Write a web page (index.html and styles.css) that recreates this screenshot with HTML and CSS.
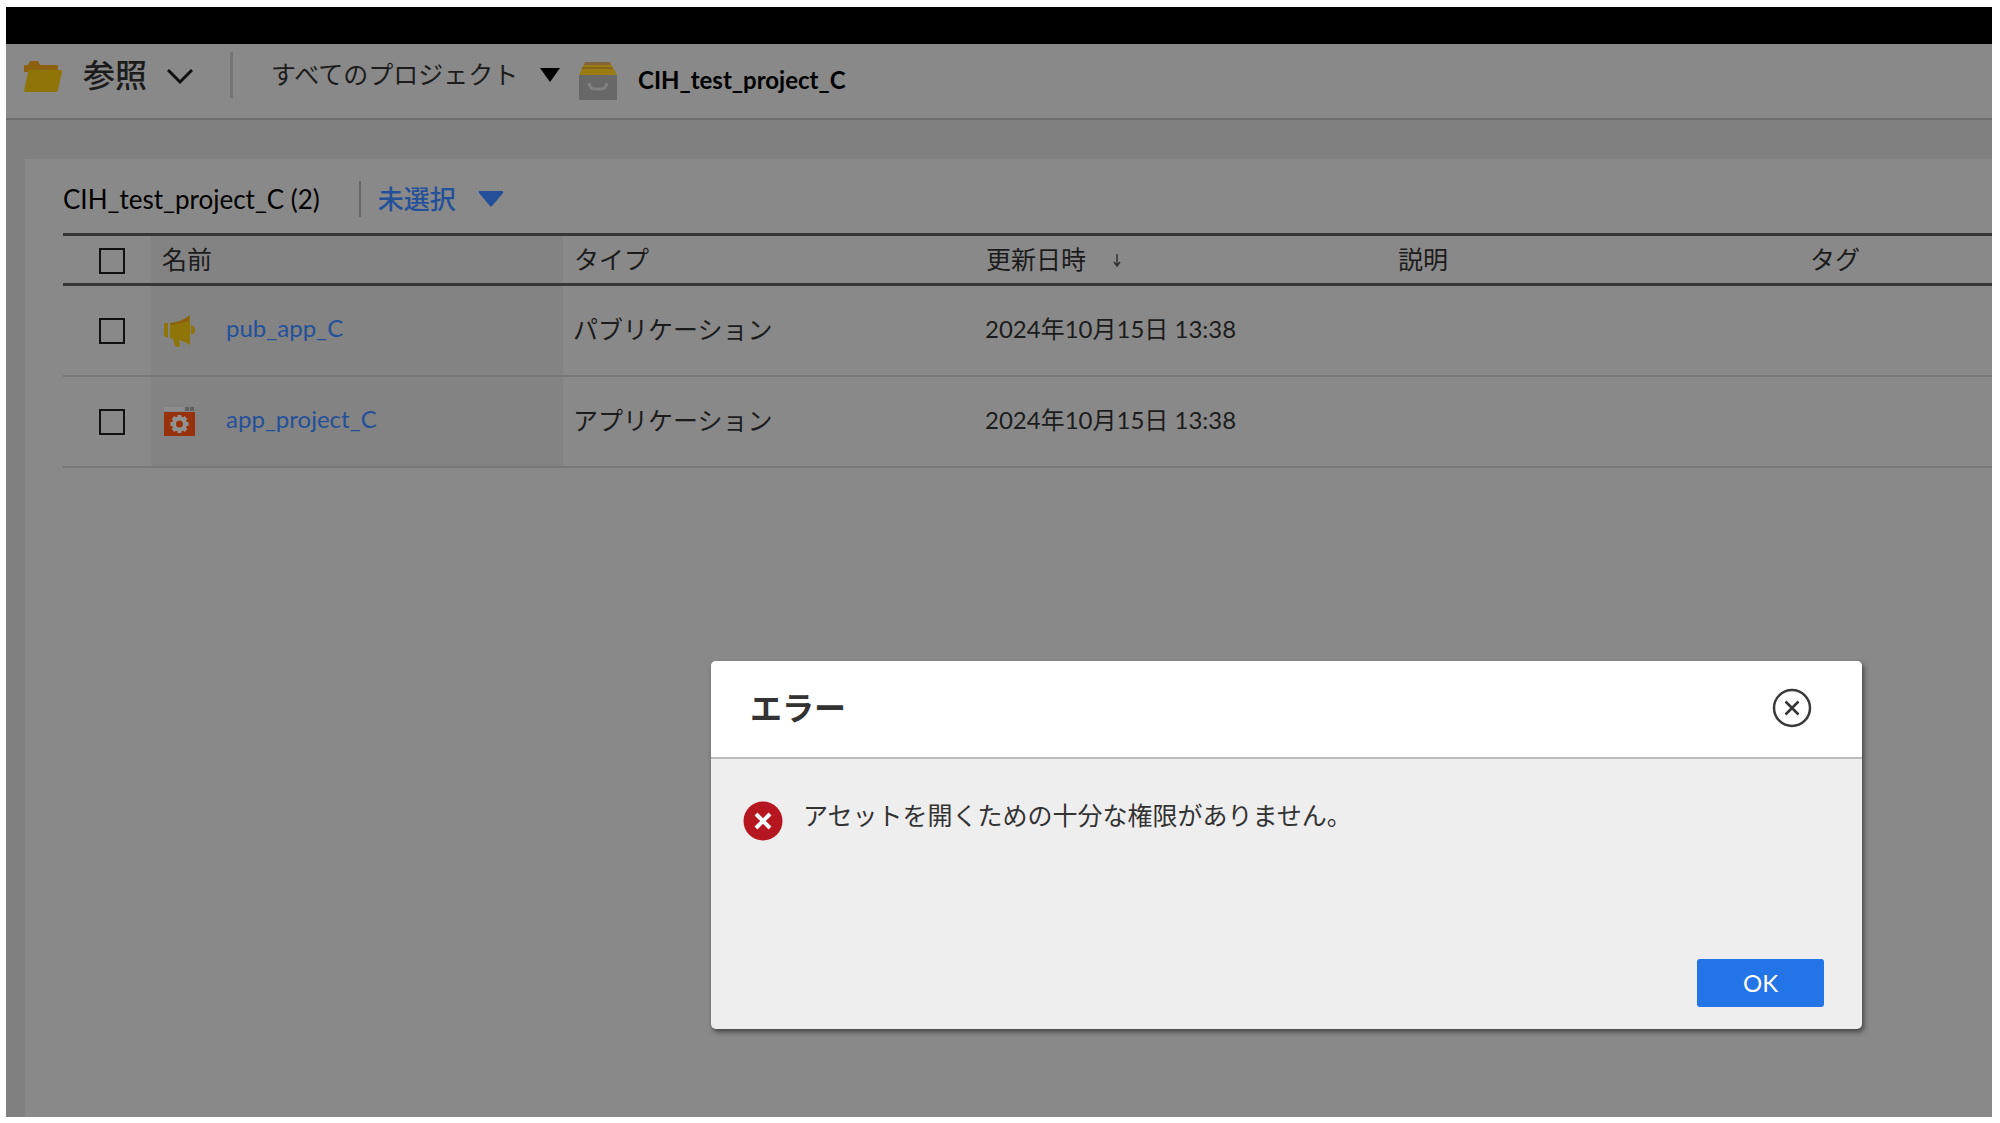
FILE: index.html
```html
<!DOCTYPE html>
<html lang="ja">
<head>
<meta charset="utf-8">
<title>CIH_test_project_C</title>
<link rel="stylesheet" href="styles.css">
</head>
<body>
<div class="app">
  <div class="topbar"></div>
  <header class="header">
    <button class="browse" type="button">
      <svg class="folder" width="40" height="34" viewBox="0 0 40 34" aria-hidden="true">
        <path d="M1 31V6q0-1 1-1h3l2-4h8l2 4h17q1 0 1 1v6H1z" fill="#8b6110"/>
        <path d="M1 31L5 12q0-2 2-2h31q1.500 0 1 1.500L35 30q-.5 2-2 2H2q-1 0-1-1z" fill="#8f7508"/>
      </svg>
      <span>参照</span>
      <svg class="chevron" width="26" height="16" viewBox="0 0 26 16" aria-hidden="true"><path d="M1 1l12 12L25 1" fill="none" stroke="#111" stroke-width="3"/></svg>
    </button>
    <span class="divider"></span>
    <label class="picker scope">
      <select aria-label="プロジェクト"><option>すべてのプロジェクト</option></select>
      <svg width="22" height="14" viewBox="0 0 22 14" aria-hidden="true"><path d="M1 0h20L11 14z" fill="#000"/></svg>
    </label>
    <div class="current">
      <svg width="40" height="40" viewBox="0 0 40 40" aria-hidden="true">
        <path d="M7 1h25l7 13H1z" fill="#9a7d12"/>
        <path d="M7 1h25l1 3H6z" fill="#84653a"/>
        <path d="M4 7h31" stroke="#84651c" stroke-width="2"/>
        <path d="M1 14h38v25H1z" fill="#686868"/>
        <path d="M11 22q1 6 6 6h6q5 0 6-6" fill="none" stroke="#808080" stroke-width="3"/>
      </svg>
      <strong>CIH_test_project_C</strong>
    </div>
  </header>
  <main class="main">
    <section class="panel">
      <div class="toolbar">
        <h1>CIH_test_project_C (2)</h1>
        <span class="rule"></span>
        <label class="picker selection">
          <select aria-label="選択"><option>未選択</option></select>
          <svg width="26" height="18" viewBox="0 0 26 18" aria-hidden="true"><path d="M2 1h22q2 0 1 2L14 16q-1 1-2 0L1 3Q0 1 2 1z" fill="#24509a"/></svg>
        </label>
      </div>
      <table class="assets">
        <colgroup><col class="c-check"><col class="c-field"><col class="c-field"><col class="c-field"><col class="c-field"><col></colgroup>
        <thead>
          <tr>
            <th class="check"><input type="checkbox" aria-label="すべて選択"></th>
            <th class="name">名前</th><th>タイプ</th>
            <th>更新日時<svg class="sort" width="10" height="18" viewBox="0 0 10 18" aria-hidden="true"><path d="M5 3v12M2 11l3 4 3-4" fill="none" stroke="#333" stroke-width="1.500"/></svg></th>
            <th>説明</th><th>タグ</th>
          </tr>
        </thead>
        <tbody>
          <tr>
            <td class="check"><input type="checkbox" aria-label="pub_app_C"></td>
            <td class="name"><div class="asset">
              <svg width="34" height="34" viewBox="0 0 34 34" aria-hidden="true">
                <path d="M1 11q2-2 4-1v14q-2 1-4-1z" fill="#8f7508"/>
                <path d="M7 10q12-1 20-8v30q-6-4-11-5l1 6q-3 2-5 0l-2-7-3-1z" fill="#8f7508"/>
                <path d="M8 10q10-1 18-7v5q-9 3-18 4z" fill="#8b6110"/>
                <path d="M28 12q4 1 4 5t-4 5z" fill="#8f7508"/>
              </svg>
              <a href="#pub_app_C">pub_app_C</a></div></td>
            <td>パブリケーション</td><td class="date">2024年10月15日 13:38</td><td></td><td></td>
          </tr>
          <tr>
            <td class="check"><input type="checkbox" aria-label="app_project_C"></td>
            <td class="name"><div class="asset">
              <svg width="34" height="34" viewBox="0 0 34 34" aria-hidden="true">
                <path d="M1 3h20v4H1z" fill="#8d8d8d"/>
                <path d="M22 3h4v4h-4zM27 3h4v4h-4z" fill="#606060"/>
                <path d="M1 8h31v24H1z" fill="#97320b"/>
                <g stroke="#929292" fill="none"><circle cx="16.500" cy="20" r="5.500" stroke-width="4"/>
                <path d="M16.500 11v3M16.500 26v3M7.500 20h3M22.500 20h3M10 13.500l2.500 2.500M20.500 24l2.500 2.500M23 13.500L20.500 16M12.500 24L10 26.500" stroke-width="4"/></g>
              </svg>
              <a href="#app_project_C">app_project_C</a></div></td>
            <td>アプリケーション</td><td class="date">2024年10月15日 13:38</td><td></td><td></td>
          </tr>
        </tbody>
      </table>
    </section>
  </main>
  <div class="dialog" role="alertdialog" aria-labelledby="dlg-title" aria-describedby="dlg-text">
    <div class="dialog-head">
      <h2 id="dlg-title">エラー</h2>
      <button class="close" type="button" aria-label="閉じる">
        <svg width="40" height="40" viewBox="0 0 40 40" aria-hidden="true"><circle cx="20" cy="20" r="18" fill="none" stroke="#3a3a3a" stroke-width="2.500"/><path d="M13.500 13.500l13 13M26.500 13.500l-13 13" stroke="#333" stroke-width="2.500"/></svg>
      </button>
    </div>
    <div class="dialog-body">
      <div class="message">
        <svg width="40" height="40" viewBox="0 0 40 40" aria-hidden="true"><circle cx="20" cy="20" r="19.500" fill="#b5161f"/><path d="M13 13l14 14M27 13L13 27" stroke="#fff" stroke-width="4"/></svg>
        <p id="dlg-text">アセットを開くための十分な権限がありません。</p>
      </div>
      <div class="actions"><button class="ok" type="button">OK</button></div>
    </div>
  </div>
</div>
</body>
</html>
```
FILE: styles.css
```css
* { box-sizing: border-box; }
body {
  margin: 0;
  padding: 7px 8px 6px 6px;
  min-height: 100vh;
  display: flex;
  background: #fff;
  color: #1c1c1c;
  font: 25px/36px Lato, "Noto Sans CJK JP", sans-serif;
}
h1, h2, p { margin: 0; }
svg { display: block; flex: none; }
button, select {
  appearance: none;
  margin: 0;
  padding: 0;
  border: 0;
  background: none;
  color: inherit;
  font: inherit;
}
.app {
  position: relative;
  flex: 1;
  min-width: 0;
  display: flex;
  flex-direction: column;
  background: #808080;
}
.topbar { height: 37px; background: #000; }
.header {
  display: flex;
  align-items: center;
  height: 76px;
  padding: 0 17px 12px;
  background: #898989;
  border-bottom: 2px solid #6d6d6d;
}
.browse {
  display: flex;
  align-items: center;
  gap: 20px;
  font-size: 32px;
  font-weight: 500;
}
.folder { margin-top: 4px; }
.chevron { margin-top: 4px; }
.divider { width: 3px; height: 46px; margin: 0 38px 0 37px; background: #757575; }
.picker { display: flex; align-items: center; }
.scope { gap: 17px; }
.scope select { padding-bottom: 2px; }
.current {
  display: flex;
  align-items: center;
  gap: 20px;
  margin: 12px 0 0 17px;
  color: #000;
}
.current strong { padding-bottom: 2px; font-size: 24px; }
.main { flex: 1; display: flex; padding: 39px 0 0 19px; }
.panel { flex: 1; min-width: 0; padding: 18px 0 0 38px; background: #898989; }
.toolbar { display: flex; align-items: center; height: 56px; padding-bottom: 12px; }
.toolbar h1 { font-size: 26px; font-weight: 400; color: #000; }
.rule { width: 2px; height: 36px; margin: 0 17px 0 39px; background: #666; }
.selection { gap: 21px; color: #24509a; font-size: 26px; font-weight: 500; }
.assets { width: 100%; table-layout: fixed; border-collapse: collapse; }
.c-check { width: 88px; }
.c-field { width: 412px; }
.assets th, .assets td { padding: 0 0 2px 11px; text-align: left; font-weight: 400; }
.assets th { height: 50px; border-top: 3px solid #373737; border-bottom: 3px solid #373737; }
.assets td { height: 91px; padding: 0 0 3px 10px; border-bottom: 2px solid #787878; }
.assets .check { padding: 2px 0 0 36px; }
.assets .name { background: #838383; }
.assets td.name { padding: 0 0 0 12px; }
.assets .date { font-size: 24px; }
.assets input {
  appearance: none;
  display: block;
  width: 26px;
  height: 26px;
  margin: 0;
  border: 2px solid #111;
}
.sort { display: inline-block; margin-left: 26px; }
.asset { display: flex; align-items: center; gap: 29px; }
.asset a { padding-bottom: 4px; color: #24509a; font-size: 24px; text-decoration: none; }
.dialog {
  position: absolute;
  right: 130px;
  bottom: 88px;
  width: 1151px;
  border-radius: 5px;
  overflow: hidden;
  background: #eee;
  color: #333;
  box-shadow: 2px 3px 5px rgba(0, 0, 0, 0.5);
}
.dialog-head {
  display: flex;
  align-items: center;
  justify-content: space-between;
  height: 98px;
  padding: 0 50px 2px 39px;
  background: #fff;
  border-bottom: 2px solid #bbb;
}
.dialog-head h2 { font-size: 32px; }
.dialog-body { padding: 38px 38px 22px 32px; }
.message { display: flex; gap: 20px; height: 162px; }
.message svg { margin-top: 4px; }
.actions { display: flex; justify-content: flex-end; }
.ok {
  width: 127px;
  height: 48px;
  border-radius: 3px;
  background: #2374e6;
  color: #fff;
  font-size: 24px;
}
```
